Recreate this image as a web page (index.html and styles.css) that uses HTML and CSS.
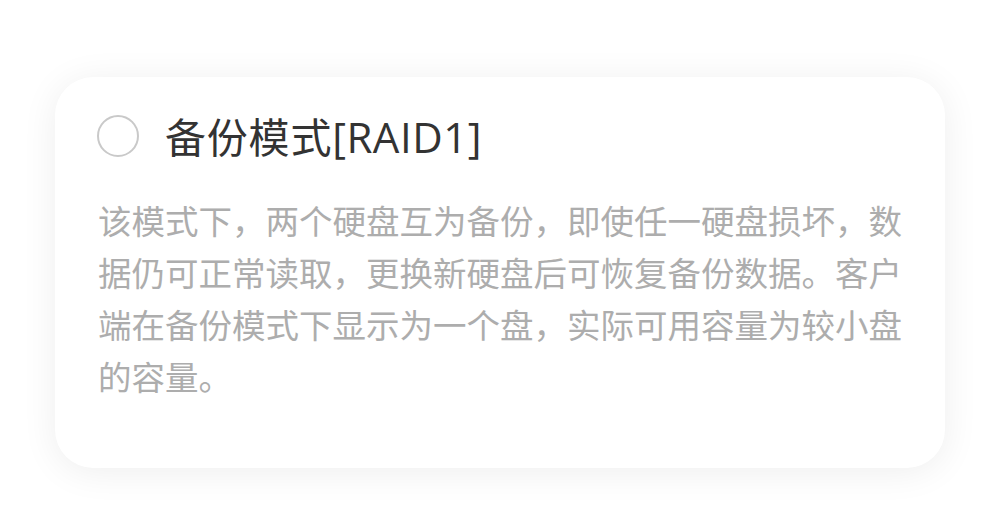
FILE: index.html
```html
<!DOCTYPE html>
<html lang="zh-CN">
<head>
    <meta charset="UTF-8">
    <meta name="viewport" content="width=device-width, initial-scale=1.0">
    <title>备份模式</title>
    <link rel="stylesheet" href="styles.css">
</head>
<body>
    <div class="page">
        <div class="card">
            <div class="option">
                <span class="radio"></span>
                <span class="title">备份模式<span class="latin">[RAID1]</span></span>
            </div>
            <p class="desc">该模式下，两个硬盘互为备份，即使任一硬盘损坏，数据仍可正常读取，更换新硬盘后可恢复备份数据。客户端在备份模式下显示为一个盘，实际可用容量为较小盘的容量。</p>
        </div>
    </div>
</body>
</html>
```

FILE: styles.css
```css
body {
    margin: 0;
    background-color: #fff;
    font-family: "Noto Sans CJK SC", "Noto Sans", sans-serif;
}
.page {
    padding: 77px 55px;
}
.card {
    height: 391px;
    box-sizing: border-box;
    padding: 36px 40px 0 42px;
    background-color: #fff;
    border-radius: 38px;
    box-shadow: 0 4px 36px rgba(0, 0, 0, 0.07);
}
.option {
    display: flex;
    align-items: center;
    gap: 26px;
    height: 46px;
}
.radio {
    width: 42px;
    height: 42px;
    box-sizing: border-box;
    border: 2.5px solid #c9c9c9;
    border-radius: 50%;
    flex-shrink: 0;
}
.title {
    font-size: 41px;
    letter-spacing: 0.8px;
    color: #333;
    line-height: 46px;
    white-space: nowrap;
}
.latin {
    font-family: "Open Sans", "Noto Sans", sans-serif;
    font-size: 42px;
    letter-spacing: 0.5px;
}
.desc {
    margin: 35px 0 0 1px;
    width: 812px;
    font-size: 33.5px;
    line-height: 52px;
    color: #adadad;
}
```
